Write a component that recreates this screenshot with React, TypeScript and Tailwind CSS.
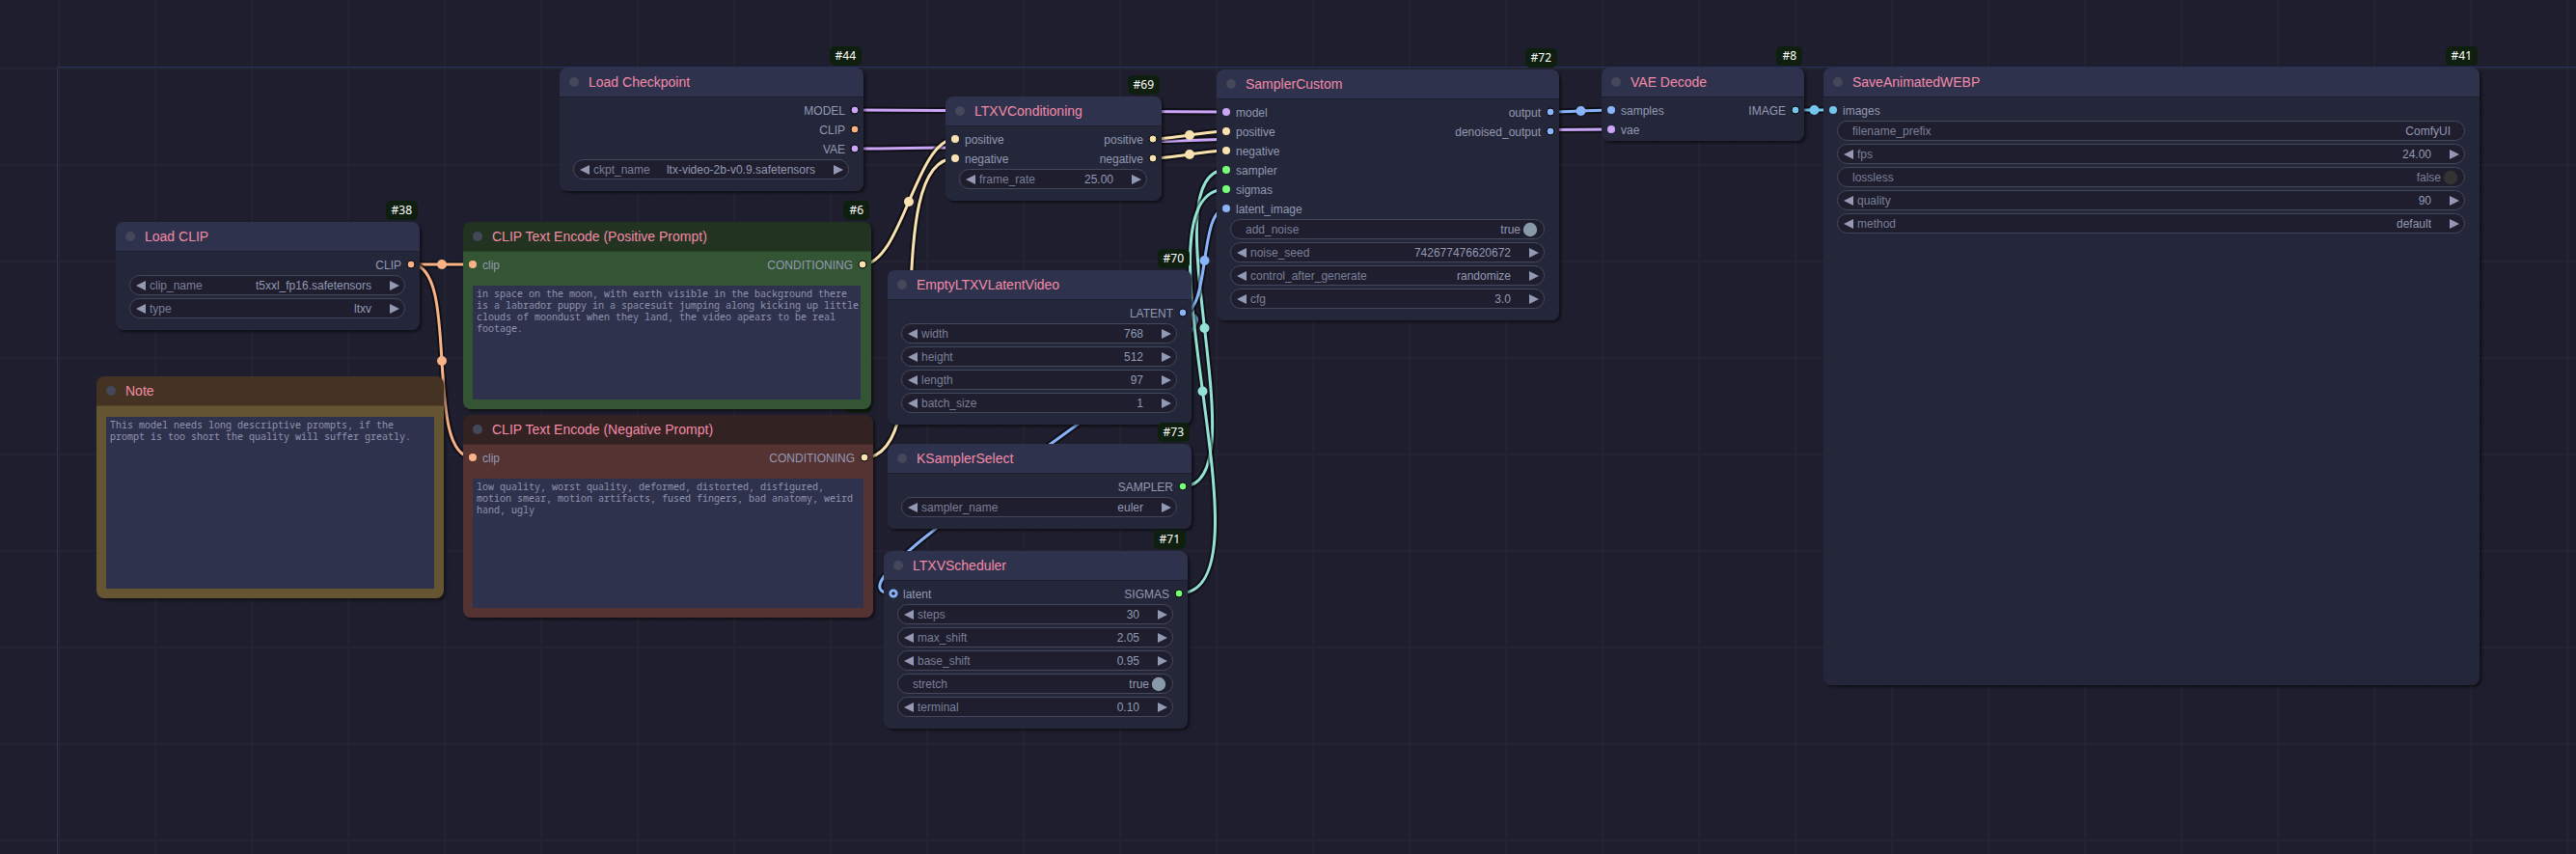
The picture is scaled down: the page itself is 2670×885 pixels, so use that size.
import React from "react";

const CLIP = "#fab387";
const COND = "#f9e2af";
const MODEL = "#cba6f7";
const LATENT = "#89b4fa";
const IMAGE = "#74c7ec";
const TEAL = "#94e2d5";
const GREEN = "#77ff77";

type Slot = { label: string; color: string; hollow?: boolean };
type WidgetData = { kind?: "arrows" | "toggle" | "text"; label: string; value: string };
type NodeData = {
  title: string;
  badge?: string;
  place: string;
  head?: string;
  body?: string;
  inputs?: Slot[];
  outputs?: Slot[];
  widgets?: WidgetData[];
  text?: string[];
  textBox?: string;
};

const nodes: NodeData[] = [
  {
    title: "Load Checkpoint",
    badge: "#44",
    place: "left-[580px] top-[70px] w-[315px] h-[128px]",
    outputs: [
      { label: "MODEL", color: MODEL },
      { label: "CLIP", color: CLIP },
      { label: "VAE", color: MODEL },
    ],
    widgets: [{ label: "ckpt_name", value: "ltx-video-2b-v0.9.safetensors" }],
  },
  {
    title: "Load CLIP",
    badge: "#38",
    place: "left-[120px] top-[230px] w-[315px] h-[112px]",
    outputs: [{ label: "CLIP", color: CLIP }],
    widgets: [
      { label: "clip_name", value: "t5xxl_fp16.safetensors" },
      { label: "type", value: "ltxv" },
    ],
  },
  {
    title: "Note",
    place: "left-[100px] top-[390px] w-[360px] h-[230px]",
    head: "bg-[#443322]",
    body: "bg-[#665533]",
    text: ["This model needs long descriptive prompts, if the", "prompt is too short the quality will suffer greatly."],
    textBox: "mt-[11px] h-[178px] w-[340px]",
  },
  {
    title: "CLIP Text Encode (Negative Prompt)",
    badge: "#7",
    place: "left-[480px] top-[430px] w-[425px] h-[210px]",
    head: "bg-[#332222]",
    body: "bg-[#553333]",
    inputs: [{ label: "clip", color: CLIP }],
    outputs: [{ label: "CONDITIONING", color: COND }],
    text: [
      "low quality, worst quality, deformed, distorted, disfigured,",
      "motion smear, motion artifacts, fused fingers, bad anatomy, weird",
      "hand, ugly",
    ],
    textBox: "mt-3 h-[134px] w-[405px]",
  },
  {
    title: "CLIP Text Encode (Positive Prompt)",
    badge: "#6",
    place: "left-[480px] top-[230px] w-[423px] h-[194px]",
    head: "bg-[#223322]",
    body: "bg-[#335533]",
    inputs: [{ label: "clip", color: CLIP }],
    outputs: [{ label: "CONDITIONING", color: COND }],
    text: [
      "in space on the moon, with earth visible in the background there",
      "is a labrador puppy in a spacesuit jumping along kicking up little",
      "clouds of moondust when they land, the video apears to be real",
      "footage.",
    ],
    textBox: "mt-3 h-[118px] w-[402px]",
  },
  {
    title: "LTXVConditioning",
    badge: "#69",
    place: "left-[980px] top-[100px] w-[224px] h-[108px]",
    inputs: [
      { label: "positive", color: COND },
      { label: "negative", color: COND },
    ],
    outputs: [
      { label: "positive", color: COND },
      { label: "negative", color: COND },
    ],
    widgets: [{ label: "frame_rate", value: "25.00" }],
  },
  {
    title: "EmptyLTXVLatentVideo",
    badge: "#70",
    place: "left-[920px] top-[280px] w-[315px] h-[160px]",
    outputs: [{ label: "LATENT", color: LATENT }],
    widgets: [
      { label: "width", value: "768" },
      { label: "height", value: "512" },
      { label: "length", value: "97" },
      { label: "batch_size", value: "1" },
    ],
  },
  {
    title: "KSamplerSelect",
    badge: "#73",
    place: "left-[920px] top-[460px] w-[315px] h-[88px]",
    outputs: [{ label: "SAMPLER", color: GREEN }],
    widgets: [{ label: "sampler_name", value: "euler" }],
  },
  {
    title: "LTXVScheduler",
    badge: "#71",
    place: "left-[916px] top-[571px] w-[315px] h-[184px]",
    inputs: [{ label: "latent", color: LATENT, hollow: true }],
    outputs: [{ label: "SIGMAS", color: GREEN }],
    widgets: [
      { label: "steps", value: "30" },
      { label: "max_shift", value: "2.05" },
      { label: "base_shift", value: "0.95" },
      { kind: "toggle", label: "stretch", value: "true" },
      { label: "terminal", value: "0.10" },
    ],
  },
  {
    title: "SamplerCustom",
    badge: "#72",
    place: "left-[1261px] top-[72px] w-[355px] h-[260px]",
    inputs: [
      { label: "model", color: MODEL },
      { label: "positive", color: COND },
      { label: "negative", color: COND },
      { label: "sampler", color: GREEN },
      { label: "sigmas", color: GREEN },
      { label: "latent_image", color: LATENT },
    ],
    outputs: [
      { label: "output", color: LATENT },
      { label: "denoised_output", color: LATENT },
    ],
    widgets: [
      { kind: "toggle", label: "add_noise", value: "true" },
      { label: "noise_seed", value: "742677476620672" },
      { label: "control_after_generate", value: "randomize" },
      { label: "cfg", value: "3.0" },
    ],
  },
  {
    title: "VAE Decode",
    badge: "#8",
    place: "left-[1660px] top-[70px] w-[210px] h-[76px]",
    inputs: [
      { label: "samples", color: LATENT },
      { label: "vae", color: MODEL },
    ],
    outputs: [{ label: "IMAGE", color: IMAGE }],
  },
  {
    title: "SaveAnimatedWEBP",
    badge: "#41",
    place: "left-[1890px] top-[70px] w-[680px] h-[640px]",
    inputs: [{ label: "images", color: IMAGE }],
    widgets: [
      { kind: "text", label: "filename_prefix", value: "ComfyUI" },
      { label: "fps", value: "24.00" },
      { kind: "toggle", label: "lossless", value: "false" },
      { label: "quality", value: "90" },
      { label: "method", value: "default" },
    ],
  },
];

type Link = [number, number, number, number, string];

const links: Link[] = [
  [1226, 324, 926, 615, LATENT],
  [426, 274, 490, 274, CLIP],
  [426, 274, 490, 474, CLIP],
  [1607, 116, 1670, 114, LATENT],
  [886, 154, 1670, 134, MODEL],
  [1861, 114, 1900, 114, IMAGE],
  [894, 274, 990, 144, COND],
  [896, 474, 990, 164, COND],
  [886, 114, 1271, 116, MODEL],
  [1195, 144, 1271, 136, COND],
  [1195, 164, 1271, 156, COND],
  [1226, 504, 1271, 176, TEAL],
  [1222, 615, 1271, 196, TEAL],
  [1226, 324, 1271, 216, LATENT],
];

function Wire({ link }: { link: Link }) {
  const [x1, y1, x2, y2, color] = link;
  const bend = Math.hypot(x2 - x1, y2 - y1) * 0.25;
  const d = `M${x1} ${y1}C${x1 + bend} ${y1} ${x2 - bend} ${y2} ${x2} ${y2}`;
  return (
    <g fill="none">
      <path d={d} stroke="#000" strokeOpacity="0.5" strokeWidth="7" />
      <path d={d} stroke={color} strokeWidth="3" />
      <circle cx={(x1 + x2) / 2} cy={(y1 + y2) / 2} r="5" fill={color} />
    </g>
  );
}

function Canvas() {
  const steps = [10, 20, 30, 40, 50, 60, 70, 80, 90];
  return (
    <svg className="absolute inset-0" width="2670" height="885">
      <defs>
        <pattern id="grid" x="60" y="70" width="100" height="100" patternUnits="userSpaceOnUse">
          <rect width="100" height="2" fill="#232331" />
          <rect width="2" height="100" fill="#232331" />
          {steps.map((y) => steps.map((x) => <rect key={`${x}-${y}`} x={x} y={y} width="2" height="2" fill="#222230" />))}
        </pattern>
      </defs>
      <rect width="2670" height="885" fill="url(#grid)" />
      <path d="M59.5 885V69.5H2670" fill="none" stroke="#24345a" />
      {links.map((l, i) => (
        <Wire key={i} link={l} />
      ))}
    </svg>
  );
}

function Dot({ slot, out }: { slot: Slot; out?: boolean }) {
  return (
    <svg width="12" height="12" viewBox="0 0 12 12" className="shrink-0">
      {slot.hollow ? (
        <circle cx="6" cy="6" r="3.2" fill="#1b1d2b" stroke={slot.color} strokeWidth="2.8" />
      ) : (
        <circle cx="6" cy="6" r="4" fill={slot.color} stroke={out ? "#000" : "none"} />
      )}
    </svg>
  );
}

function Arrow({ right }: { right?: boolean }) {
  return (
    <svg width="10" height="10" viewBox="0 0 10 10" className="mt-[5px] shrink-0" fill="#9399b2">
      <path d={right ? "M0 0L10 5L0 10Z" : "M10 0L0 5L10 10Z"} />
    </svg>
  );
}

function Widget({ w }: { w: WidgetData }) {
  const kind = w.kind ?? "arrows";
  const on = w.value === "true";
  return (
    <div className="flex h-[21px] items-start rounded-full border border-[#45475a] bg-[#1e1e2e] text-[12px] leading-[20px]">
      {kind === "arrows" ? (
        <span className="mr-1 ml-1.5 flex">
          <Arrow />
        </span>
      ) : (
        <span className="w-[15px]" />
      )}
      <span className="flex-1 text-[#7b7f98]">{w.label}</span>
      <span className={kind === "toggle" && !on ? "text-[#7b7f98]" : "text-[#9399b2]"}>{w.value}</span>
      {kind === "arrows" && (
        <span className="mr-[5px] ml-[19px] flex">
          <Arrow right />
        </span>
      )}
      {kind === "toggle" && (
        <svg width="16" height="16" className="mt-0.5 mr-1.5 ml-0.5">
          <circle cx="8" cy="8" r="7.2" fill={on ? "#8899aa" : "#333333"} />
        </svg>
      )}
      {kind === "text" && <span className="w-3.5" />}
    </div>
  );
}

function GraphNode({ n }: { n: NodeData }) {
  return (
    <section className={`absolute flex flex-col rounded-lg shadow-[2px_2px_3px_rgba(0,0,0,0.5)] ${n.place}`}>
      {n.badge && (
        <span className="absolute -top-[22px] right-[2px] h-5 rounded-[5px] bg-[#0f1f0f] px-1.5 font-['Noto_Sans'] text-[12px] leading-[19px] text-white">
          {n.badge}
        </span>
      )}
      <header className={`flex h-[30px] shrink-0 items-center rounded-t-lg pl-2.5 ${n.head ?? "bg-[#2f324d]"}`}>
        <span className="size-2.5 rounded-full bg-[#45475a]" />
        <h2 className="ml-2.5 text-[14px] leading-[30px] whitespace-nowrap text-[#f38ba8]">{n.title}</h2>
      </header>
      <div className={`flex min-h-0 flex-1 flex-col rounded-b-lg border-t border-t-black/20 ${n.body ?? "bg-[#24273a]"}`}>
        {(n.inputs || n.outputs) && (
          <div className="flex justify-between pt-[3px] text-[12px] text-[#9399b2]">
            <ul>
              {n.inputs?.map((s) => (
                <li key={s.label} className="flex h-5 items-center gap-1 pl-1">
                  <Dot slot={s} />
                  <span className="pt-0.5 leading-[20px]">{s.label}</span>
                </li>
              ))}
            </ul>
            <ul>
              {n.outputs?.map((s) => (
                <li key={s.label} className="flex h-5 items-center justify-end gap-1 pr-[3px]">
                  <span className="pt-0.5 leading-[20px]">{s.label}</span>
                  <Dot slot={s} out />
                </li>
              ))}
            </ul>
          </div>
        )}
        {n.widgets && (
          <div className="mt-px flex flex-col gap-[3px] pr-[15px] pl-[14px]">
            {n.widgets.map((w) => (
              <Widget key={w.label} w={w} />
            ))}
          </div>
        )}
        {n.text && (
          <div
            className={`ml-2.5 bg-[#2f324d] px-1 py-0.5 font-['Noto_Sans_Mono','DejaVu_Sans_Mono',monospace] text-[10px] leading-[12px] whitespace-pre text-[#8f94ad] ${n.textBox}`}
          >
            {n.text.join("\n")}
          </div>
        )}
      </div>
    </section>
  );
}

export default function App() {
  return (
    <main className="relative h-[885px] w-[2670px] overflow-hidden bg-[#1e1e2e] font-['Liberation_Sans',Arial,sans-serif]">
      <Canvas />
      {nodes.map((n) => (
        <GraphNode key={n.title} n={n} />
      ))}
    </main>
  );
}
